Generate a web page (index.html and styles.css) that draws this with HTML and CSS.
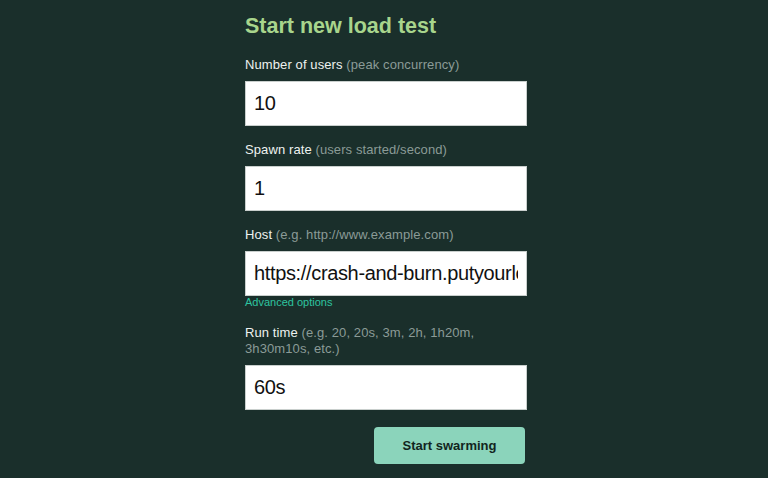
FILE: index.html
```html
<!DOCTYPE html>
<html>
<head>
<meta charset="utf-8">
<link rel="stylesheet" href="styles.css">
</head>
<body>
<div class="page">
  <form class="form">
    <h2 class="title">Start new load test</h2>
    <div class="field">
      <label class="label">Number of users <span class="hint">(peak concurrency)</span></label>
      <input class="input" type="text" value="10">
    </div>
    <div class="field">
      <label class="label">Spawn rate <span class="hint">(users started/second)</span></label>
      <input class="input" type="text" value="1">
    </div>
    <div class="field field-host">
      <label class="label">Host <span class="hint">(e.g. http://www.example.com)</span></label>
      <input class="input" type="text" value="https://crash-and-burn.putyourlocusttest.here">
      <a class="advanced">Advanced options</a>
    </div>
    <div class="field">
      <label class="label">Run time <span class="hint">(e.g. 20, 20s, 3m, 2h, 1h20m, 3h30m10s, etc.)</span></label>
      <input class="input" type="text" value="60s">
    </div>
    <div class="actions">
      <button type="button" class="btn">Start swarming</button>
    </div>
  </form>
</div>
</body>
</html>
```
FILE: styles.css
```css
html, body {
  margin: 0;
  padding: 0;
  background: #1a2f2b;
  height: 100%;
}
body {
  font-family: "Liberation Sans", Arial, Helvetica, sans-serif;
  color: #e9eeec;
}
.page {
  display: flex;
  justify-content: flex-start;
  padding-left: 245px;
}
.form {
  width: 282px;
  display: flex;
  flex-direction: column;
  padding-top: 14px;
}
.title {
  margin: 0 0 19px 0;
  font-size: 21.5px;
  line-height: 24px;
  font-weight: bold;
  color: #a8d58c;
}
.field {
  display: flex;
  flex-direction: column;
  margin-bottom: 16px;
}
.label {
  font-size: 13px;
  line-height: 16px;
  margin-bottom: 8px;
  color: #eef2f0;
  letter-spacing: 0.1px;
}
.hint {
  color: #8b9b97;
}
.input {
  box-sizing: border-box;
  width: 282px;
  height: 45px;
  margin: 0;
  border: 1px solid #c9cfcd;
  border-radius: 0;
  background: #ffffff;
  padding: 0 8px;
  font-family: "Liberation Sans", Arial, Helvetica, sans-serif;
  font-size: 20px;
  letter-spacing: -0.35px;
  color: #111;
  outline: none;
}
.field-host {
  margin-bottom: 17px;
}
.advanced {
  font-size: 11px;
  line-height: 12px;
  color: #2ec4a0;
  margin-top: 0;
}
.actions {
  display: flex;
  justify-content: flex-end;
  padding-right: 2px;
  margin-top: 1px;
}
.btn {
  width: 151px;
  height: 37px;
  border: none;
  border-radius: 4px;
  background: #8bd4bb;
  color: #122520;
  font-family: "Liberation Sans", Arial, Helvetica, sans-serif;
  font-size: 13px;
  font-weight: bold;
  cursor: pointer;
}
```
